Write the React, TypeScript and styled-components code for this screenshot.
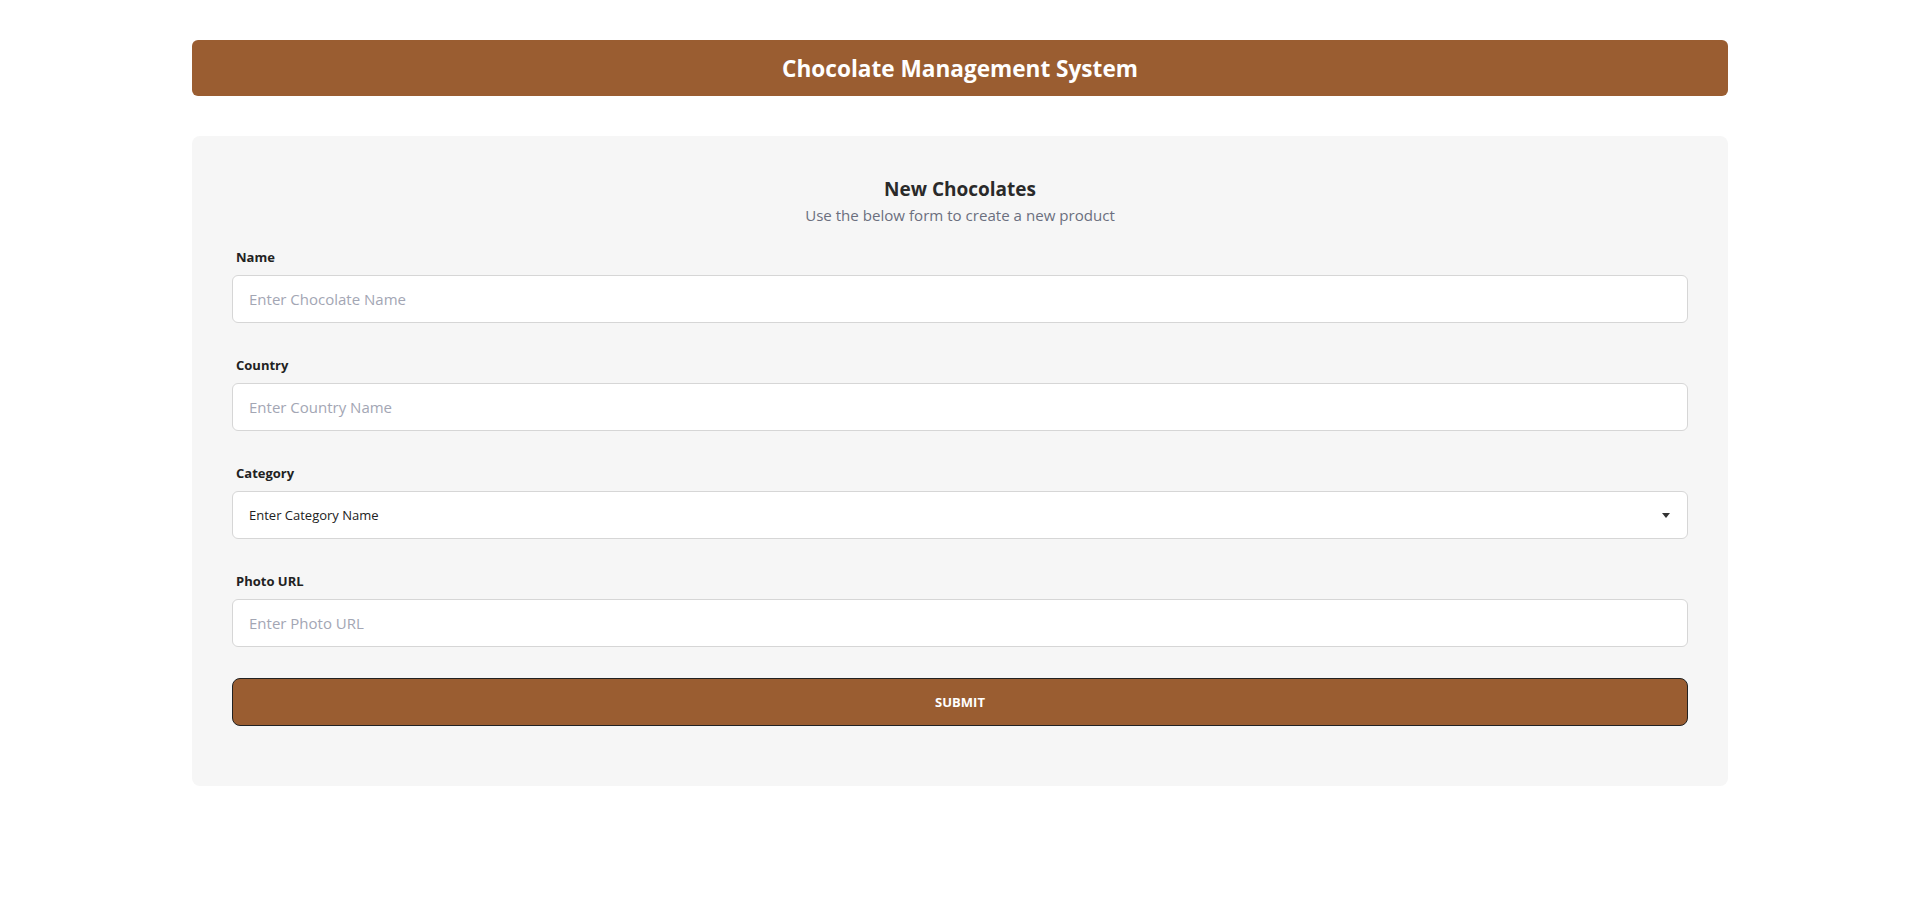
import * as React from 'react';
import styled, { createGlobalStyle } from 'styled-components';

const GlobalStyle = createGlobalStyle`
  * {
    box-sizing: border-box;
  }
  body {
    margin: 0;
    background: #ffffff;
    font-family: "Open Sans", "Noto Sans", sans-serif;
    color: #222222;
  }
`;

const brown = '#9a5d31';

type FieldProps = {
    label: string;
    placeholder: string;
};

const Field = ({ label, placeholder }: FieldProps) => (
    <FieldBlock>
        <Label>{label}</Label>
        <Input placeholder={placeholder} type="text" />
    </FieldBlock>
);

export default function App() {
    return (
        <>
            <GlobalStyle />
            <Page>
                <Header>
                    <h1>Chocolate Management System</h1>
                </Header>
                <Card>
                    <CardHead>
                        <h2>New Chocolates</h2>
                        <p>Use the below form to create a new product</p>
                    </CardHead>
                    <Form onSubmit={(e) => e.preventDefault()}>
                        <Field label="Name" placeholder="Enter Chocolate Name" />
                        <Field label="Country" placeholder="Enter Country Name" />
                        <FieldBlock>
                            <Label>Category</Label>
                            <SelectWrap>
                                <Select defaultValue="">
                                    <option value="">Enter Category Name</option>
                                    <option value="dark">Dark</option>
                                    <option value="milk">Milk</option>
                                    <option value="white">White</option>
                                </Select>
                                <Caret viewBox="0 0 8 5" aria-hidden="true">
                                    <path d="M0 0h8L4 5z" fill="#333" />
                                </Caret>
                            </SelectWrap>
                        </FieldBlock>
                        <Field label="Photo URL" placeholder="Enter Photo URL" />
                        <Button type="submit">SUBMIT</Button>
                    </Form>
                </Card>
            </Page>
        </>
    );
}

const Page = styled.div`
    width: 80%;
    margin: 40px auto;
`;

const Header = styled.header`
    height: 56px;
    display: flex;
    align-items: center;
    justify-content: center;
    background: ${brown};
    border-radius: 6px;

    h1 {
        margin: 0;
        color: #ffffff;
        font-size: 22.6px;
        font-weight: 700;
    }
`;

const Card = styled.section`
    margin-top: 40px;
    padding: 39px 40px 60px;
    background: #f6f6f6;
    border-radius: 8px;
`;

const CardHead = styled.div`
    text-align: center;
    margin-bottom: 20px;

    h2 {
        margin: 0;
        font-size: 19px;
        line-height: 28px;
        font-weight: 700;
        color: #2a2a2a;
    }

    p {
        margin: 0;
        font-size: 15.1px;
        line-height: 24px;
        color: #6b6f7e;
    }
`;

const Form = styled.form`
    display: flex;
    flex-direction: column;
`;

const FieldBlock = styled.div`
    display: flex;
    flex-direction: column;
    gap: 8px;
    margin-bottom: 32px;

    &:last-of-type {
        margin-bottom: 31px;
    }
`;

const Label = styled.label`
    padding-left: 4px;
    font-size: 13px;
    line-height: 20px;
    font-weight: 700;
    color: #222222;
`;

const Input = styled.input`
    height: 48px;
    padding: 0 16px;
    border: 1px solid #d6d6d6;
    border-radius: 6px;
    background: #ffffff;
    font-family: inherit;
    font-size: 15px;
    color: #222222;
    outline: none;

    &::placeholder {
        color: #a3a6b4;
    }
`;

const SelectWrap = styled.div`
    position: relative;
`;

const Select = styled.select`
    width: 100%;
    height: 48px;
    padding: 0 16px;
    border: 1px solid #d6d6d6;
    border-radius: 6px;
    background: #ffffff;
    font-family: inherit;
    font-size: 13px;
    color: #222222;
    appearance: none;
    outline: none;
`;

const Caret = styled.svg`
    position: absolute;
    right: 18px;
    top: 22px;
    width: 8px;
    height: 5px;
    pointer-events: none;
`;

const Button = styled.button`
    height: 48px;
    border: 1px solid #222222;
    border-radius: 8px;
    background: ${brown};
    color: #ffffff;
    font-family: inherit;
    font-size: 13px;
    font-weight: 700;
    cursor: pointer;
`;
